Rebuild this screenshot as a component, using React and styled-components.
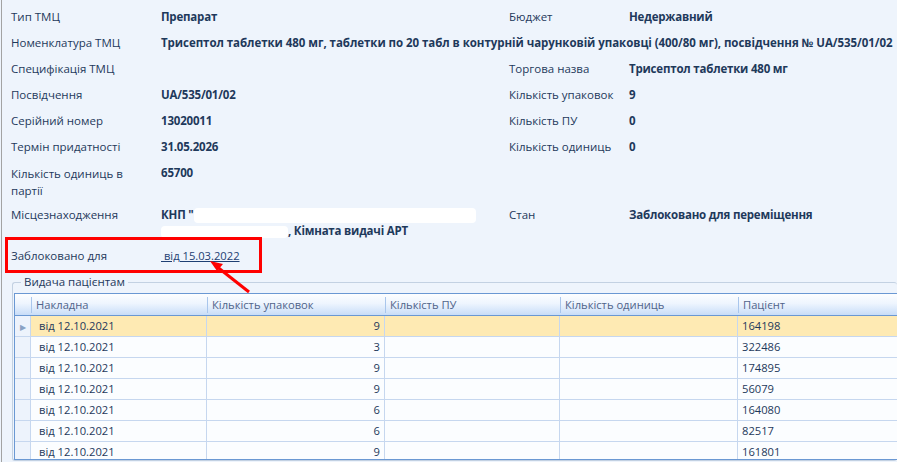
import React from "react";
import styled, { createGlobalStyle } from "styled-components";

const GlobalStyle = createGlobalStyle`
  html, body {
    margin: 0;
    padding: 0;
    background: #eef4fc;
    overflow: hidden;
  }
  body {
    font-family: "Segoe UI", "Open Sans", "Noto Sans", sans-serif;
    font-size: 11.5px;
    color: #1e395b;
  }
`;

const Page = styled.div`
  position: relative;
  width: 895px;
  height: 462px;
  margin-left: 1px;
  border-left: 1px solid #a3a3a3;
  background: #eef4fc;
  overflow: hidden;
`;

const Form = styled.div`
  padding: 9px 0 0 9px;
`;

const Row = styled.div`
  display: grid;
  grid-template-columns: 150px 348px 120px 1fr;
  height: ${(p) => p.h || 26}px;
  line-height: 16px;
`;

const Label = styled.div`
  font-weight: 400;
  max-width: ${(p) => (p.narrow ? "125px" : "none")};
  white-space: ${(p) => (p.narrow ? "normal" : "nowrap")};
  line-height: ${(p) => (p.narrow ? "17px" : "16px")};
`;

const Value = styled.div`
  font-weight: 700;
  white-space: nowrap;
  grid-column: ${(p) => (p.wide ? "2 / 5" : "auto")};
  letter-spacing: ${(p) => (p.wide ? "-0.05px" : "-0.2px")};
`;

const LocValue = styled.div`
  font-weight: 700;
  white-space: nowrap;
  letter-spacing: -0.2px;
  line-height: 15px;
`;

const Redact = styled.span`
  display: inline-block;
  vertical-align: middle;
  width: ${(p) => p.w}px;
  height: ${(p) => p.hgt || 13}px;
  background: #ffffff;
  border-radius: 4px;
`;

const Link = styled.a`
  color: #1e3f73;
  text-decoration: underline;
  font-weight: 400;
  font-size: 11.2px;
  white-space: pre;
`;

const GroupBox = styled.fieldset`
  margin: 0 0 0 10px;
  padding: 0 0 0 1px;
  border: 1px solid #c3d1e2;
  border-right: none;
  border-radius: 3px;
`;

const Legend = styled.legend`
  margin-left: 7px;
  padding: 0 3px;
  font-size: 11.5px;
  line-height: 14px;
  color: #1e395b;
`;

const Grid = styled.div`
  border: 1px solid #6a98d3;
  border-right: none;
  margin-top: 4px;
  background: #fbfdff;
  height: 165px;
  overflow: hidden;
  font-size: 11.2px;
`;

const GridRow = styled.div`
  display: grid;
  grid-template-columns: 16px 176px 178px 175px 178px 1fr;
  height: ${(p) => (p.header ? 22 : 21)}px;
  background: ${(p) =>
    p.header
      ? "linear-gradient(#fdfeff, #eef5fe 45%, #c8ddf8)"
      : p.selected
      ? "#feeab3"
      : "#fbfdff"};
  border-bottom: 1px solid ${(p) => (p.header ? "#6a98d3" : "#c6d7ef")};
  box-sizing: border-box;
`;

const HeadCell = styled.div`
  display: flex;
  align-items: center;
  padding-left: 5px;
  color: #50648a;
  position: relative;
  white-space: nowrap;
  &::before {
    content: "";
    position: absolute;
    left: 0;
    top: 3px;
    bottom: 2px;
    border-left: ${(p) => (p.first ? "none" : "1px solid #a9c6ec")};
  }
`;

const Cell = styled.div`
  display: flex;
  align-items: center;
  justify-content: ${(p) => (p.right ? "flex-end" : "flex-start")};
  padding: 0 4px 0 8px;
  border-right: 1px solid #c6d7ef;
  white-space: nowrap;
  line-height: 20px;
`;

const Indicator = styled.div`
  display: flex;
  align-items: center;
  justify-content: center;
  background: #edf3fc;
  border-right: 1px solid #c6d7ef;
  color: #8aa2c4;
  font-size: 8px;
`;

const LastCell = styled(Cell)`
  border-right: none;
  padding-left: 4px;
`;

const Highlight = styled.div`
  position: absolute;
  left: 3px;
  top: 237px;
  width: 251px;
  height: 30px;
  border: 3px solid #ff0000;
  pointer-events: none;
`;

const Arrow = styled.svg`
  position: absolute;
  left: 200px;
  top: 255px;
  overflow: visible;
`;

const rows = [
  ["9", "164198"],
  ["3", "322486"],
  ["9", "174895"],
  ["9", "56079"],
  ["6", "164080"],
  ["6", "82517"],
  ["9", "161801"],
];

export default function App() {
  return (
    <>
      <GlobalStyle />
      <Page>
        <Form>
          <Row>
            <Label>Тип ТМЦ</Label>
            <Value>Препарат</Value>
            <Label>Бюджет</Label>
            <Value>Недержавний</Value>
          </Row>
          <Row>
            <Label>Номенклатура ТМЦ</Label>
            <Value wide>
              Трисептол таблетки 480 мг, таблетки по 20 табл в контурній
              чарунковій упаковці (400/80 мг), посвідчення № UA/535/01/02
            </Value>
          </Row>
          <Row>
            <Label>Специфікація ТМЦ</Label>
            <Value />
            <Label>Торгова назва</Label>
            <Value>Трисептол таблетки 480 мг</Value>
          </Row>
          <Row>
            <Label>Посвідчення</Label>
            <Value>UA/535/01/02</Value>
            <Label>Кількість упаковок</Label>
            <Value>9</Value>
          </Row>
          <Row>
            <Label>Серійний номер</Label>
            <Value>13020011</Value>
            <Label>Кількість ПУ</Label>
            <Value>0</Value>
          </Row>
          <Row>
            <Label>Термін придатності</Label>
            <Value>31.05.2026</Value>
            <Label>Кількість одиниць</Label>
            <Value>0</Value>
          </Row>
          <Row h={42}>
            <Label narrow>Кількість одиниць в партії</Label>
            <Value>65700</Value>
          </Row>
          <Row h={41}>
            <Label>Місцезнаходження</Label>
            <LocValue>
              <div>
                КНП "<Redact w={282} hgt={15} />
              </div>
              <div>
                <Redact w={127} hgt={12} />, Кімната видачі АРТ
              </div>
            </LocValue>
            <Label>Стан</Label>
            <Value>Заблоковано для переміщення</Value>
          </Row>
          <Row h={27}>
            <Label>Заблоковано для</Label>
            <Link href="#">{" від 15.03.2022"}</Link>
          </Row>
        </Form>
        <GroupBox>
          <Legend>Видача пацієнтам</Legend>
          <Grid>
            <GridRow header>
              <HeadCell first />
              <HeadCell>Накладна</HeadCell>
              <HeadCell>Кількість упаковок</HeadCell>
              <HeadCell>Кількість ПУ</HeadCell>
              <HeadCell>Кількість одиниць</HeadCell>
              <HeadCell>Пацієнт</HeadCell>
            </GridRow>
            {rows.map(([qty, patient], i) => (
              <GridRow key={i} selected={i === 0}>
                <Indicator>{i === 0 ? "▶" : ""}</Indicator>
                <Cell>від 12.10.2021</Cell>
                <Cell right>{qty}</Cell>
                <Cell />
                <Cell />
                <LastCell>{patient}</LastCell>
              </GridRow>
            ))}
          </Grid>
        </GroupBox>
        <Highlight />
        <Arrow width="60" height="45" viewBox="0 0 60 45">
          <line x1="47" y1="37" x2="14" y2="11" stroke="#ff0000" strokeWidth="3" />
          <polygon points="8,6 21,9 15,16" fill="#ff0000" />
        </Arrow>
      </Page>
    </>
  );
}
